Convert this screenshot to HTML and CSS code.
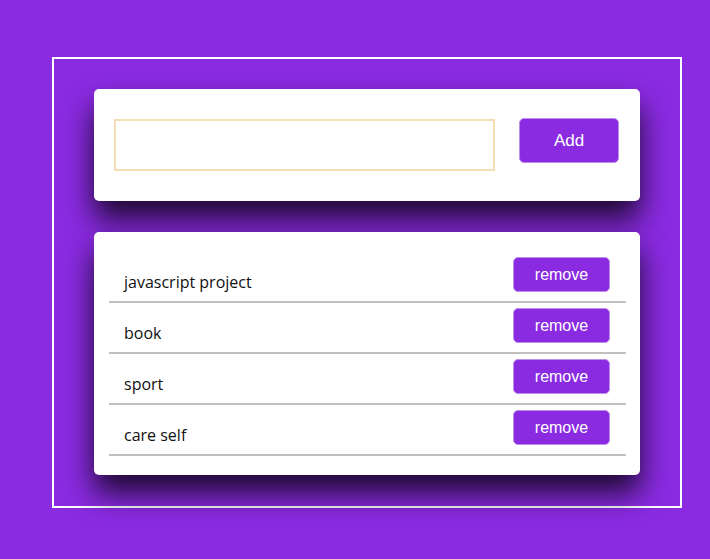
FILE: index.html
```html
<!DOCTYPE html>
<html>
<head>
<meta charset="utf-8">
<link rel="stylesheet" href="styles.css">
</head>
<body>
<div class="frame">
  <div class="card form">
    <input class="field" type="text">
    <button class="btn add">Add</button>
  </div>
  <div class="card list">
    <ul class="items">
      <li class="item"><span class="label">javascript project</span><button class="btn remove">remove</button></li>
      <li class="item"><span class="label">book</span><button class="btn remove">remove</button></li>
      <li class="item"><span class="label">sport</span><button class="btn remove">remove</button></li>
      <li class="item"><span class="label">care self</span><button class="btn remove">remove</button></li>
    </ul>
  </div>
</div>
</body>
</html>
```
FILE: styles.css
```css
html, body {
  margin: 0;
  padding: 0;
}
body {
  background: #8a2be2;
  width: 710px;
  height: 559px;
  overflow: hidden;
  padding-top: 57px;
  padding-left: 52px;
  box-sizing: border-box;
}
.frame {
  width: 630px;
  height: 451px;
  box-sizing: border-box;
  border: 2px solid #ffffff;
  padding: 30px 40px;
  display: flex;
  flex-direction: column;
  gap: 31px;
}
.card {
  background: #ffffff;
  border-radius: 5px;
  box-shadow: 0 18px 30px rgba(0, 0, 0, 0.8);
}
.form {
  height: 112px;
  box-sizing: border-box;
  padding: 29px 20px 0 20px;
  display: flex;
  align-items: flex-start;
}
.field {
  margin: 1px 0 0 0;
  width: 381px;
  height: 52px;
  box-sizing: border-box;
  border: 2px solid #f5deb3;
  outline: none;
  padding: 0 10px;
  background: #fff;
}
.btn {
  background: #8a2be2;
  color: #ffffff;
  border: 1px solid #bb8cec;
  border-radius: 5px;
  font-family: "Liberation Sans", Arial, sans-serif;
  padding: 0;
  cursor: pointer;
}
.add {
  margin-left: 24px;
  width: 100px;
  height: 45px;
  font-size: 17px;
}
.list {
  height: 243px;
  box-sizing: border-box;
  padding: 20px 14px 0 15px;
}
.items {
  list-style: none;
  margin: 0;
  padding: 0;
}
.item {
  display: flex;
  justify-content: space-between;
  align-items: flex-end;
  padding: 5px 16px 9px 15px;
  border-bottom: 2px solid #c0c0c0;
}
.label {
  font-family: "Open Sans", "Noto Sans", sans-serif;
  font-size: 16px;
  line-height: 20px;
  color: #111;
}
.remove {
  width: 97px;
  height: 35px;
  font-size: 16px;
}
```
